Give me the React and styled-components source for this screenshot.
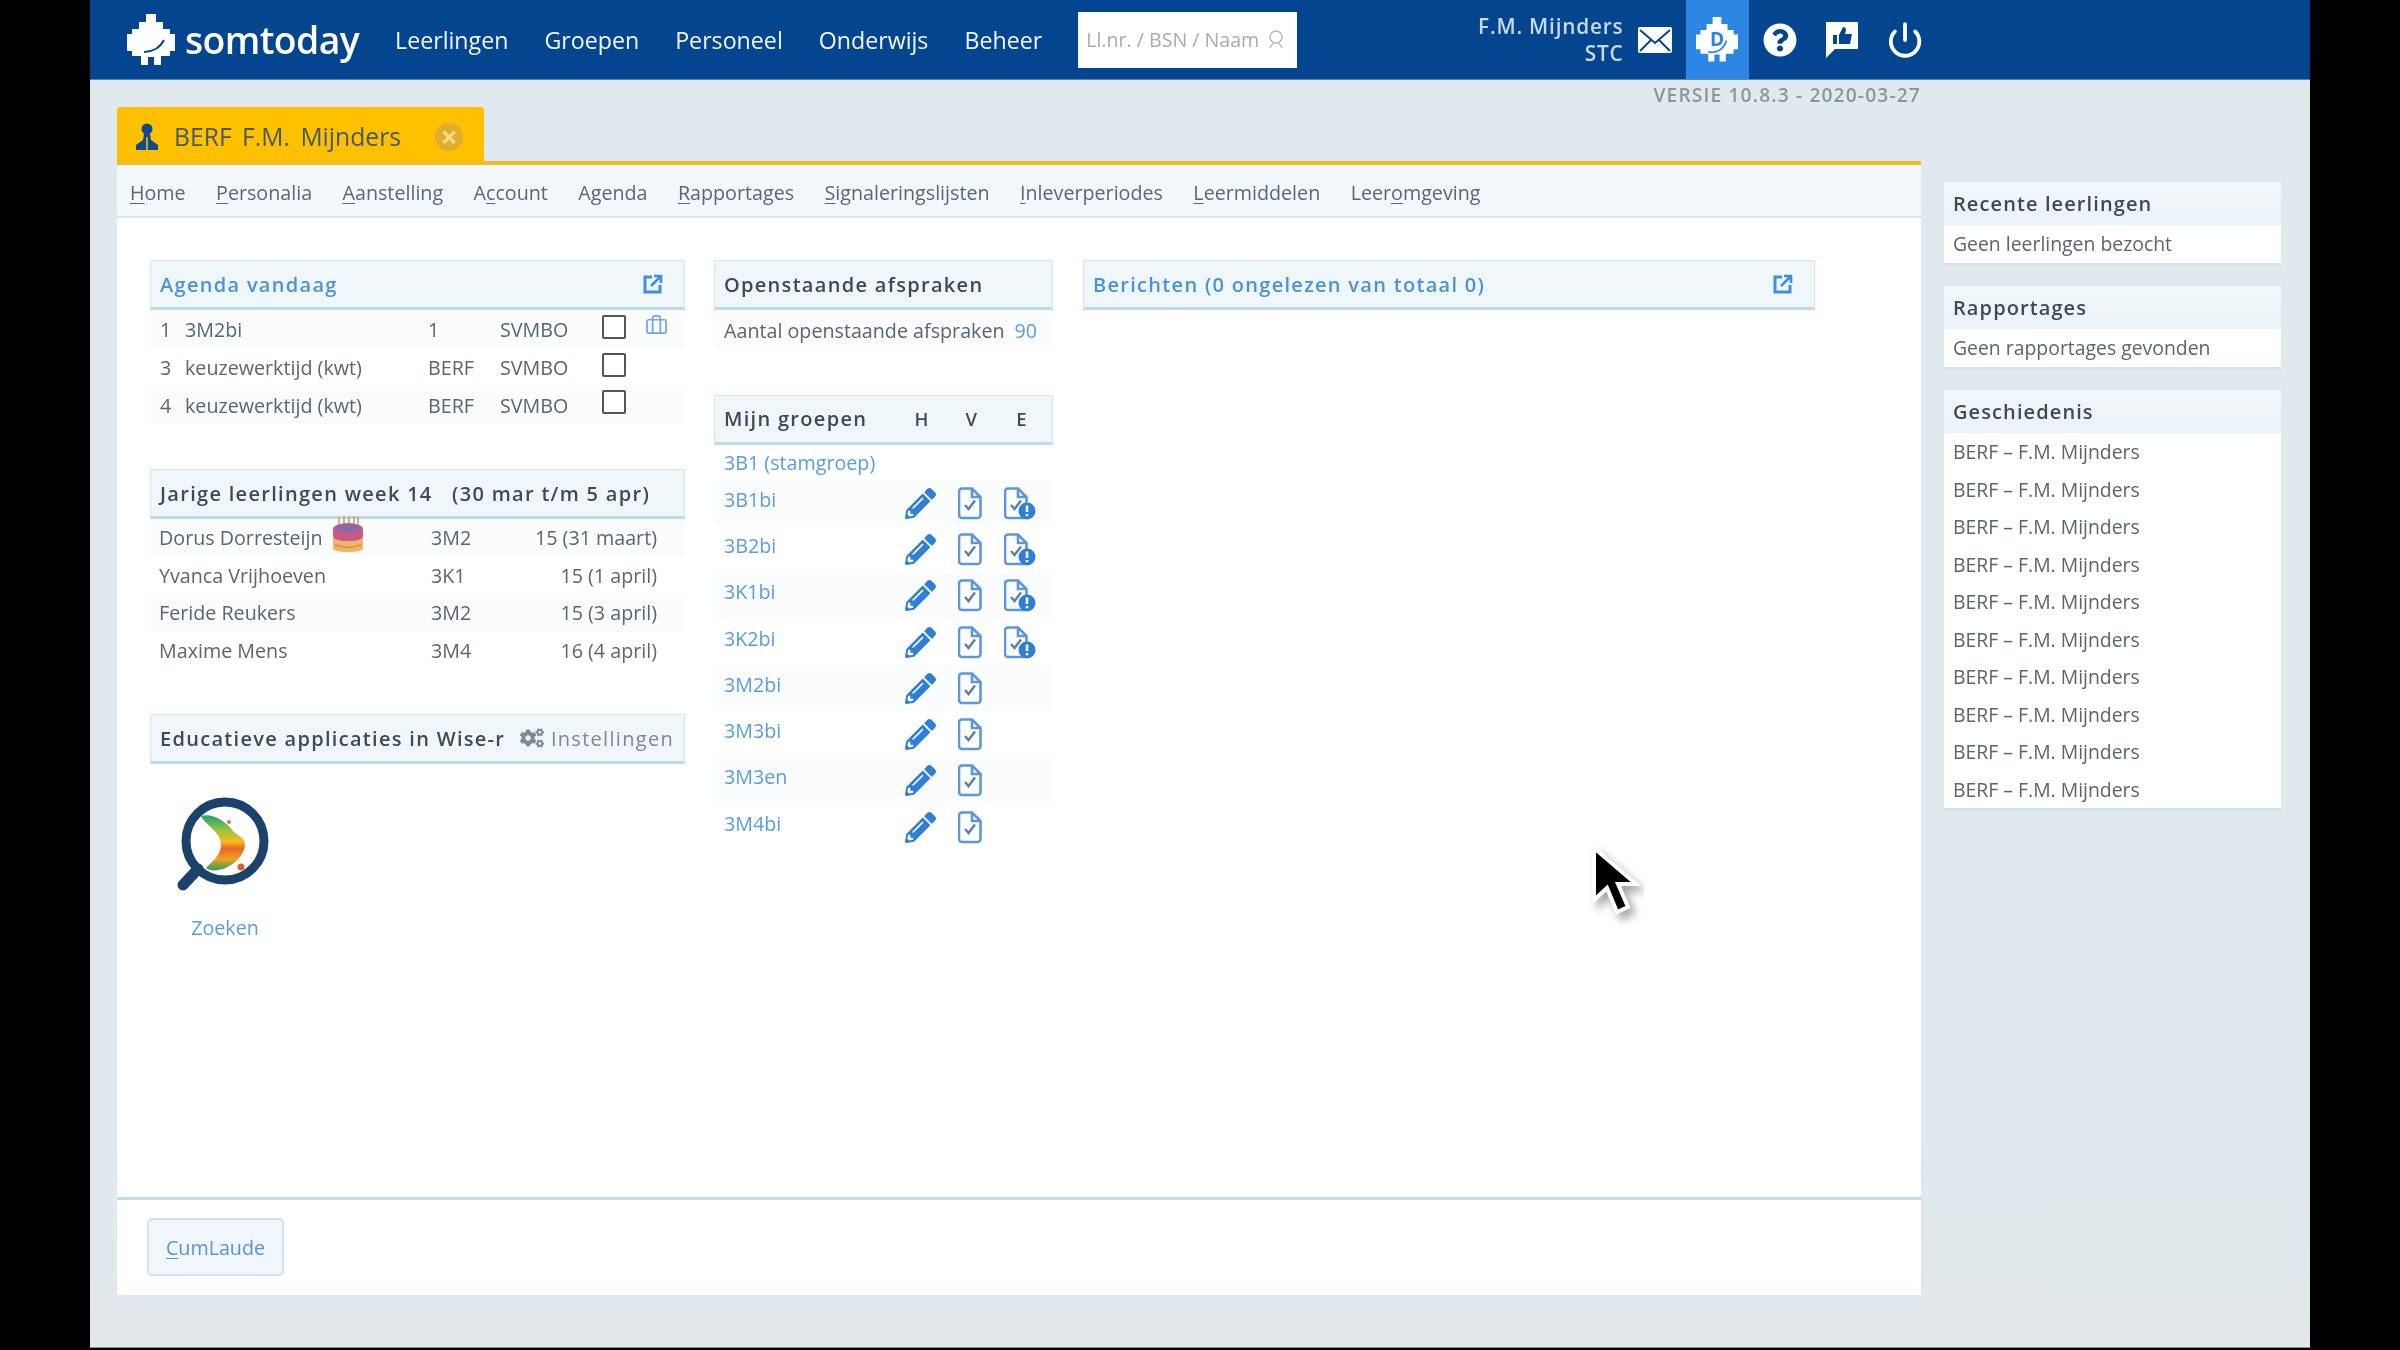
import React from 'react';
import styled, { createGlobalStyle } from 'styled-components';
import { FaPencilAlt, FaCogs, FaQuestionCircle } from 'react-icons/fa';
import { Briefcase, Power } from 'lucide-react';

const GlobalStyle = createGlobalStyle`
  html, body { margin: 0; padding: 0; background: #000; }
  body { font-family: "Open Sans", "Liberation Sans", sans-serif; color: #5a6570; }
  * { box-sizing: border-box; }
`;

const Stage = styled.div`
  position: relative;
  width: 2220px;
  height: 1348px;
  margin: 0 auto;
  background: linear-gradient(to bottom, #dfe9ee 0%, #dfe9ee 85%, #e3e8ea 100%);
  border-bottom: 1px solid #8b8f91;
  overflow: hidden;
  filter: blur(0.55px);
`;

const TopBar = styled.header`
  display: flex;
  align-items: center;
  height: 80px;
  padding: 0 374px 0 37px;
  background: #03468f;
  border-bottom: 1px solid #5c86bd;
  color: #fff;
`;

const LogoLink = styled.div`
  display: flex;
  align-items: center;
  gap: 10px;
  margin-right: 36px;
  font-size: 37.3px;
  font-weight: 600;
  letter-spacing: -0.6px;
  color: #fff;
`;

const MainMenu = styled.nav`
  display: flex;
  align-items: center;
  gap: 36px;
`;

const MenuItem = styled.span`
  font-size: 23.2px;
  color: #f3f7fb;
`;

const SearchBox = styled.div`
  display: flex;
  align-items: center;
  justify-content: space-between;
  width: 219px;
  height: 56px;
  padding: 0 11px 0 8px;
  background: #fff;
  font-size: 19.6px;
  color: #a9abad;
`;

const UserName = styled.div`
  margin-left: auto;
  text-align: right;
  font-size: 20.8px;
  font-weight: 600;
  line-height: 27px;
  letter-spacing: 0.8px;
  color: #c9d8ea;
`;

const IconCell = styled.div`
  display: flex;
  align-items: center;
  justify-content: center;
  width: 62.5px;
  height: 79px;
  background: ${(p) => (p.$active ? '#2d86e2' : 'transparent')};
  color: #fff;
`;

const Columns = styled.div`
  display: flex;
  gap: 23px;
  padding-left: 27px;
`;

const MainColumn = styled.div`
  display: flex;
  flex-direction: column;
  width: 1804px;
`;

const VersionRow = styled.div`
  height: 27px;
  line-height: 30px;
  text-align: right;
  font-size: 19.2px;
  font-weight: 600;
  letter-spacing: 1.15px;
  color: #8b979f;
`;

const ActiveTab = styled.div`
  display: flex;
  align-items: center;
  width: 367px;
  height: 54px;
  padding: 5px 0 0 18px;
  background: #ffc000;
  border-radius: 3px 3px 0 0;
  font-size: 24.7px;
  color: #45586e;
`;

const TabLabel = styled.span`
  margin-left: 15px;
  word-spacing: 4px;
`;

const TabClose = styled.span`
  display: flex;
  align-items: center;
  justify-content: center;
  width: 28px;
  height: 28px;
  margin-left: 34px;
  border-radius: 50%;
  background: #dfae2c;
  color: #f6dc8c;
  font-size: 30px;
  font-weight: 700;
  line-height: 1;
`;

const Panel = styled.section`
  display: flex;
  flex-direction: column;
  height: 1137px;
  border-top: 4px solid #f1bd24;
  background: #fff;
`;

const SubMenu = styled.nav`
  display: flex;
  align-items: center;
  gap: 30.4px;
  height: 53px;
  padding: 3px 0 0 13px;
  background: #f2f8fb;
  border-bottom: 2px solid #d4e8f1;
`;

const SubMenuItem = styled.span`
  font-size: 19.7px;
  color: #5d6770;
`;

const Key = styled.span`
  text-decoration: underline;
  text-underline-offset: 3px;
  text-decoration-thickness: 1px;
`;

const Content = styled.div`
  display: flex;
  align-items: flex-start;
  flex: 1;
  padding: 42px 0 0 33px;
`;

const WidgetColumn = styled.div`
  display: flex;
  flex-direction: column;
  gap: ${(p) => p.$gap || 0}px;
  width: ${(p) => p.$width}px;
  margin-right: ${(p) => p.$right || 0}px;
`;

const WidgetHeader = styled.div`
  display: flex;
  align-items: center;
  justify-content: space-between;
  height: 50px;
  padding: 0 21px 0 9px;
  background: #f0f7fb;
  border: 1px solid #d6e6ed;
  border-bottom: 3px solid #bcdcea;
  font-size: 20px;
  font-weight: 600;
  letter-spacing: 1.3px;
  white-space: pre;
  color: ${(p) => (p.$link ? '#4a92dc' : '#3e4a55')};
`;

const HeaderSide = styled.span`
  display: flex;
  align-items: center;
  gap: 7px;
  margin-right: -11px;
  font-weight: 400;
  color: #7e8992;
`;

const RowList = styled.div`
  padding-top: 1px;
`;

const AgendaRow = styled.div`
  display: grid;
  grid-template-columns: 25px 243px 72px 102px 43px 40px;
  align-items: center;
  height: 37.7px;
  padding-left: 10px;
  font-size: 19.7px;
  &:nth-child(odd) { background: #fafcfd; }
`;

const Check = styled.span`
  display: block;
  width: 24px;
  height: 24px;
  margin-top: -6px;
  border: 2px solid #555;
  border-radius: 2px;
  background: #fff;
`;

const Blue = styled.span`
  display: flex;
  margin-top: -8px;
  color: #6ea6e6;
`;

const BirthdayRow = styled.div`
  display: grid;
  grid-template-columns: 272px 1fr auto;
  align-items: center;
  height: 37.5px;
  padding: 0 28px 0 9px;
  font-size: 19.7px;
  &:nth-child(odd) { background: #fafcfd; }
`;

const BirthdayName = styled.span`
  display: flex;
  align-items: center;
  gap: 8px;
`;

const AppTile = styled.div`
  display: flex;
  flex-direction: column;
  align-items: center;
  width: 150px;
  margin-top: 31px;
  font-size: 19.7px;
  color: #5a9ce2;
`;

const AppLogo = styled.div`
  margin-left: -8px;
`;

const AppLabel = styled.span`
  margin-top: 13px;
`;

const CountRow = styled.div`
  display: flex;
  align-items: center;
  gap: 10px;
  height: 37.5px;
  margin-top: 2px;
  padding-left: 10px;
  background: #fafcfd;
  font-size: 19.7px;
`;

const CountValue = styled.span`
  color: #5a9ce2;
`;

const GroupColumns = styled.span`
  display: grid;
  grid-template-columns: 50px 50px 50px;
  margin-right: -16px;
  justify-items: center;
  font-weight: 600;
  font-size: 18.5px;
`;

const GroupTitle = styled.div`
  height: 35.5px;
  padding-left: 10px;
  line-height: 35px;
  font-size: 19.7px;
  color: #5a9ce2;
`;

const GroupRow = styled.div`
  display: grid;
  grid-template-columns: 171px 50px 50px 50px;
  align-items: center;
  justify-items: center;
  height: 46.3px;
  padding-left: 10px;
  &:nth-child(odd) { background: #fafcfd; }
`;

const GroupName = styled.span`
  justify-self: start;
  margin-top: -8px;
  font-size: 19.7px;
  color: #5a9ce2;
`;

const Footer = styled.footer`
  height: 101px;
  padding: 18px 0 0 30px;
  border-top: 3px solid #bfdcea;
  border-bottom: 3px solid #d9ebf3;
`;

const FooterButton = styled.button`
  width: 137px;
  height: 58px;
  background: #f0f6fb;
  border: 2px solid #d3e3ec;
  border-radius: 5px;
  font-family: inherit;
  font-size: 19.7px;
  color: #5a94d6;
`;

const SideColumn = styled.aside`
  display: flex;
  flex-direction: column;
  gap: 21.5px;
  width: 337px;
  padding-top: 102px;
`;

const SideCard = styled.div`
  background: #fff;
  border-bottom: 2px solid #cfe3ee;
`;

const SideTitle = styled.div`
  height: 43px;
  padding-left: 9px;
  line-height: 44px;
  background: linear-gradient(to bottom, #f2f8fb, #eaf3f8);
  font-size: 20px;
  font-weight: 600;
  letter-spacing: 1.1px;
  color: #3e4a55;
`;

const SideRow = styled.div`
  height: 37.5px;
  padding-left: 9px;
  line-height: 38px;
  font-size: 19.4px;
  color: #5a6570;
`;

const Cursor = styled.svg`
  position: absolute;
  left: 1494px;
  top: 838px;
`;

const LogoMark = ({ size = 48, letter }) => (
  <svg width={size} height={size * 1.06} viewBox="0 0 48 51">
    <path
      fill="#fff"
      d="M19 0h10v8h7v7h7v5h5v17h-5v5h-9v9h-7v-8h-6v8h-7v-9H5v-5H0V20h5v-5h7V8h7z"
    />
    {letter ? (
      <>
        <text x="24" y="33" textAnchor="middle" fontSize="22" fontWeight="700" fill="#2d86e2">{letter}</text>
        <path d="M14 40c9 2 18-3 21-13" fill="none" stroke="#2d86e2" strokeWidth="2" />
      </>
    ) : (
      <path d="M17 38c8 0 16-4 20-12" fill="none" stroke="#03468f" strokeWidth="2" />
    )}
  </svg>
);

const MailIcon = () => (
  <svg width="34" height="26" viewBox="0 0 34 26">
    <rect width="34" height="26" rx="2" fill="#fff" />
    <path d="M2 3l15 13L32 3M2 24l11-11M32 24L21 13" fill="none" stroke="#03468f" strokeWidth="2" />
  </svg>
);

const ThumbIcon = () => (
  <svg width="34" height="38" viewBox="0 0 34 38">
    <path fill="#fff" d="M1 1h32v27H10l-9 9z" />
    <path fill="#03468f" d="M8 14h4v9H8zM14 14l4-8c2 0 3 1 3 3l-1 4h7l-2 10H14z" />
  </svg>
);

const SearchGlyph = () => (
  <svg width="20" height="20" viewBox="0 0 20 20" fill="none" stroke="#b5b7b9" strokeWidth="1.4">
    <circle cx="10" cy="7" r="6" />
    <path d="M7 13l-3 5M13 13l3 5" />
  </svg>
);

const PersonIcon = () => (
  <svg width="24" height="28" viewBox="0 0 24 28">
    <circle cx="12" cy="6" r="5.5" fill="#0d4a8e" />
    <path fill="#0d4a8e" d="M9 11h6l1 6 7 5v5H1v-5l7-5z" />
    <path d="M12 14v13" stroke="#ffc000" strokeWidth="1.6" />
  </svg>
);

const OpenIcon = () => (
  <svg width="20" height="20" viewBox="0 0 20 20" fill="none" stroke="#3f8fe0" strokeWidth="3">
    <path d="M9 3H2v15h15v-7" />
    <path d="M8 12l9-9M11 2h7v7" strokeWidth="2.6" />
  </svg>
);

const FileCheck = ({ warn }) => (
  <svg width={warn ? 32 : 24} height="33" viewBox={warn ? '0 0 32 33' : '0 0 24 33'} fill="none">
    <path
      d="M4 1.5h10l8.5 8.5v18a3 3 0 0 1-3 3H4a3 3 0 0 1-3-3v-23.5a3 3 0 0 1 3-3zM14 1.5V10h8.5"
      stroke="#5c97dc"
      strokeWidth="2.6"
    />
    <path d="M7 18l3.5 4L17 13.5" stroke="#5f7fa6" strokeWidth="2.4" />
    {warn && (
      <>
        <circle cx="23" cy="24" r="8.5" fill="#2f7fd8" />
        <path d="M23 18.5v6.5M23 27v2.2" stroke="#fff" strokeWidth="2.6" />
      </>
    )}
  </svg>
);

const CakeIcon = () => (
  <svg width="34" height="36" viewBox="0 0 34 36" style={{ marginTop: -8 }}>
    <path d="M8 1v8M13 0v9M18 0v9M23 0v9M27 1v8" stroke="#c8a25a" strokeWidth="1.6" />
    <path fill="#f0b468" d="M2 20h30v12c0 3-6 4-15 4S2 35 2 32z" />
    <ellipse cx="17" cy="13" rx="15" ry="6" fill="#c45a88" />
    <path fill="#c45a88" d="M2 13h30v7c0 3-6 5-15 5S2 23 2 20z" />
    <ellipse cx="17" cy="12" rx="11" ry="3.5" fill="#7d6bb0" />
    <path d="M4 29c8 3 18 3 26 0" stroke="#d9913f" strokeWidth="1.6" fill="none" />
  </svg>
);

const WiseLogo = () => (
  <svg width="96" height="100" viewBox="0 0 96 100">
    <defs>
      <linearGradient id="wise" x1="0" y1="0" x2="0" y2="1">
        <stop offset="0" stopColor="#1fa56b" />
        <stop offset="0.3" stopColor="#a8c33c" />
        <stop offset="0.48" stopColor="#fdb913" />
        <stop offset="0.6" stopColor="#e8662a" />
        <stop offset="0.8" stopColor="#e9a51f" />
        <stop offset="1" stopColor="#2d9c62" />
      </linearGradient>
    </defs>
    <circle cx="52" cy="46" r="39" fill="#fff" stroke="#1b426b" strokeWidth="9" />
    <path d="M25 74L10 90" stroke="#1b426b" strokeWidth="11" strokeLinecap="round" />
    <path
      fill="url(#wise)"
      d="M28 21c12-3 24 5 32 15 5 5 12 7 12 13 0 11-11 21-22 25-7 2-14 2-17-1 6-7 15-12 15-24 0-12-17-20-20-28z"
    />
    <circle cx="68" cy="72" r="3.5" fill="#d9622b" />
    <circle cx="56" cy="27" r="2" fill="#e0705a" />
  </svg>
);

const agenda = [
  { hour: '1', name: '3M2bi', who: '1', bag: true },
  { hour: '3', name: 'keuzewerktijd (kwt)', who: 'BERF' },
  { hour: '4', name: 'keuzewerktijd (kwt)', who: 'BERF' },
];

const birthdays = [
  { name: 'Dorus Dorresteijn', cake: true, group: '3M2', age: '15 (31 maart)' },
  { name: 'Yvanca Vrijhoeven', group: '3K1', age: '15 (1 april)' },
  { name: 'Feride Reukers', group: '3M2', age: '15 (3 april)' },
  { name: 'Maxime Mens', group: '3M4', age: '16 (4 april)' },
];

const groups = [
  { name: '3B1bi', warn: true },
  { name: '3B2bi', warn: true },
  { name: '3K1bi', warn: true },
  { name: '3K2bi', warn: true },
  { name: '3M2bi' },
  { name: '3M3bi' },
  { name: '3M3en' },
  { name: '3M4bi' },
];

export default function App() {
  return (
    <Stage>
      <GlobalStyle />
      <TopBar>
        <LogoLink><LogoMark />somtoday</LogoLink>
        <MainMenu>
          <MenuItem>Leerlingen</MenuItem>
          <MenuItem>Groepen</MenuItem>
          <MenuItem>Personeel</MenuItem>
          <MenuItem>Onderwijs</MenuItem>
          <MenuItem>Beheer</MenuItem>
          <SearchBox>Ll.nr. / BSN / Naam <SearchGlyph /></SearchBox>
        </MainMenu>
        <UserName>F.M. Mijnders<br />STC</UserName>
        <IconCell><MailIcon /></IconCell>
        <IconCell $active><LogoMark size={42} letter="D" /></IconCell>
        <IconCell><FaQuestionCircle size={34} /></IconCell>
        <IconCell><ThumbIcon /></IconCell>
        <IconCell><Power size={38} strokeWidth={2.4} /></IconCell>
      </TopBar>

      <Columns>
        <MainColumn>
          <VersionRow>VERSIE 10.8.3 - 2020-03-27</VersionRow>
          <ActiveTab>
            <PersonIcon />
            <TabLabel>BERF F.M. Mijnders</TabLabel>
            <TabClose>×</TabClose>
          </ActiveTab>
          <Panel>
            <SubMenu>
              <SubMenuItem><Key>H</Key>ome</SubMenuItem>
              <SubMenuItem><Key>P</Key>ersonalia</SubMenuItem>
              <SubMenuItem><Key>A</Key>anstelling</SubMenuItem>
              <SubMenuItem>A<Key>c</Key>count</SubMenuItem>
              <SubMenuItem>Agenda</SubMenuItem>
              <SubMenuItem><Key>R</Key>apportages</SubMenuItem>
              <SubMenuItem><Key>S</Key>ignaleringslijsten</SubMenuItem>
              <SubMenuItem><Key>I</Key>nleverperiodes</SubMenuItem>
              <SubMenuItem><Key>L</Key>eermiddelen</SubMenuItem>
              <SubMenuItem>Leer<Key>o</Key>mgeving</SubMenuItem>
            </SubMenu>

            <Content>
              <WidgetColumn $width={535} $right={29} $gap={45}>
                <div>
                  <WidgetHeader $link>Agenda vandaag <OpenIcon /></WidgetHeader>
                  <RowList>
                    {agenda.map((row) => (
                      <AgendaRow key={row.hour}>
                        <span>{row.hour}</span>
                        <span>{row.name}</span>
                        <span>{row.who}</span>
                        <span>SVMBO</span>
                        <Check />
                        {row.bag && <Blue><Briefcase size={23} strokeWidth={1.8} /></Blue>}
                      </AgendaRow>
                    ))}
                  </RowList>
                </div>
                <div>
                  <WidgetHeader>Jarige leerlingen week 14   (30 mar t/m 5 apr)</WidgetHeader>
                  <div>
                    {birthdays.map((row) => (
                      <BirthdayRow key={row.name}>
                        <BirthdayName>{row.name}{row.cake && <CakeIcon />}</BirthdayName>
                        <span>{row.group}</span>
                        <span>{row.age}</span>
                      </BirthdayRow>
                    ))}
                  </div>
                </div>
                <div>
                  <WidgetHeader>
                    Educatieve applicaties in Wise-r
                    <HeaderSide><FaCogs size={24} />Instellingen</HeaderSide>
                  </WidgetHeader>
                  <AppTile>
                    <AppLogo><WiseLogo /></AppLogo>
                    <AppLabel>Zoeken</AppLabel>
                  </AppTile>
                </div>
              </WidgetColumn>

              <WidgetColumn $width={339} $right={30} $gap={45}>
                <div>
                  <WidgetHeader>Openstaande afspraken</WidgetHeader>
                  <CountRow>Aantal openstaande afspraken <CountValue>90</CountValue></CountRow>
                </div>
                <div>
                  <WidgetHeader>
                    Mijn groepen
                    <GroupColumns><span>H</span><span>V</span><span>E</span></GroupColumns>
                  </WidgetHeader>
                  <GroupTitle>3B1 (stamgroep)</GroupTitle>
                  <div>
                    {groups.map((row) => (
                      <GroupRow key={row.name}>
                        <GroupName>{row.name}</GroupName>
                        <FaPencilAlt size={31} color="#2f7fd8" />
                        <FileCheck />
                        {row.warn ? <FileCheck warn /> : <span />}
                      </GroupRow>
                    ))}
                  </div>
                </div>
              </WidgetColumn>

              <WidgetColumn $width={732}>
                <WidgetHeader $link>Berichten (0 ongelezen van totaal 0) <OpenIcon /></WidgetHeader>
              </WidgetColumn>
            </Content>

            <Footer>
              <FooterButton><Key>C</Key>umLaude</FooterButton>
            </Footer>
          </Panel>
        </MainColumn>

        <SideColumn>
          <SideCard>
            <SideTitle>Recente leerlingen</SideTitle>
            <SideRow>Geen leerlingen bezocht</SideRow>
          </SideCard>
          <SideCard>
            <SideTitle>Rapportages</SideTitle>
            <SideRow>Geen rapportages gevonden</SideRow>
          </SideCard>
          <SideCard>
            <SideTitle>Geschiedenis</SideTitle>
            {Array.from({ length: 10 }, (_, i) => (
              <SideRow key={i}>BERF – F.M. Mijnders</SideRow>
            ))}
          </SideCard>
        </SideColumn>
      </Columns>

      <Cursor width="60" height="90" viewBox="0 0 60 90">
        <path
          d="M10 10v52l13-12 10 24 11-5-10-23h18z"
          fill="#000"
          stroke="#fff"
          strokeWidth="4"
          style={{ filter: 'drop-shadow(5px 6px 4px rgba(0,0,0,0.35))' }}
        />
      </Cursor>
    </Stage>
  );
}
